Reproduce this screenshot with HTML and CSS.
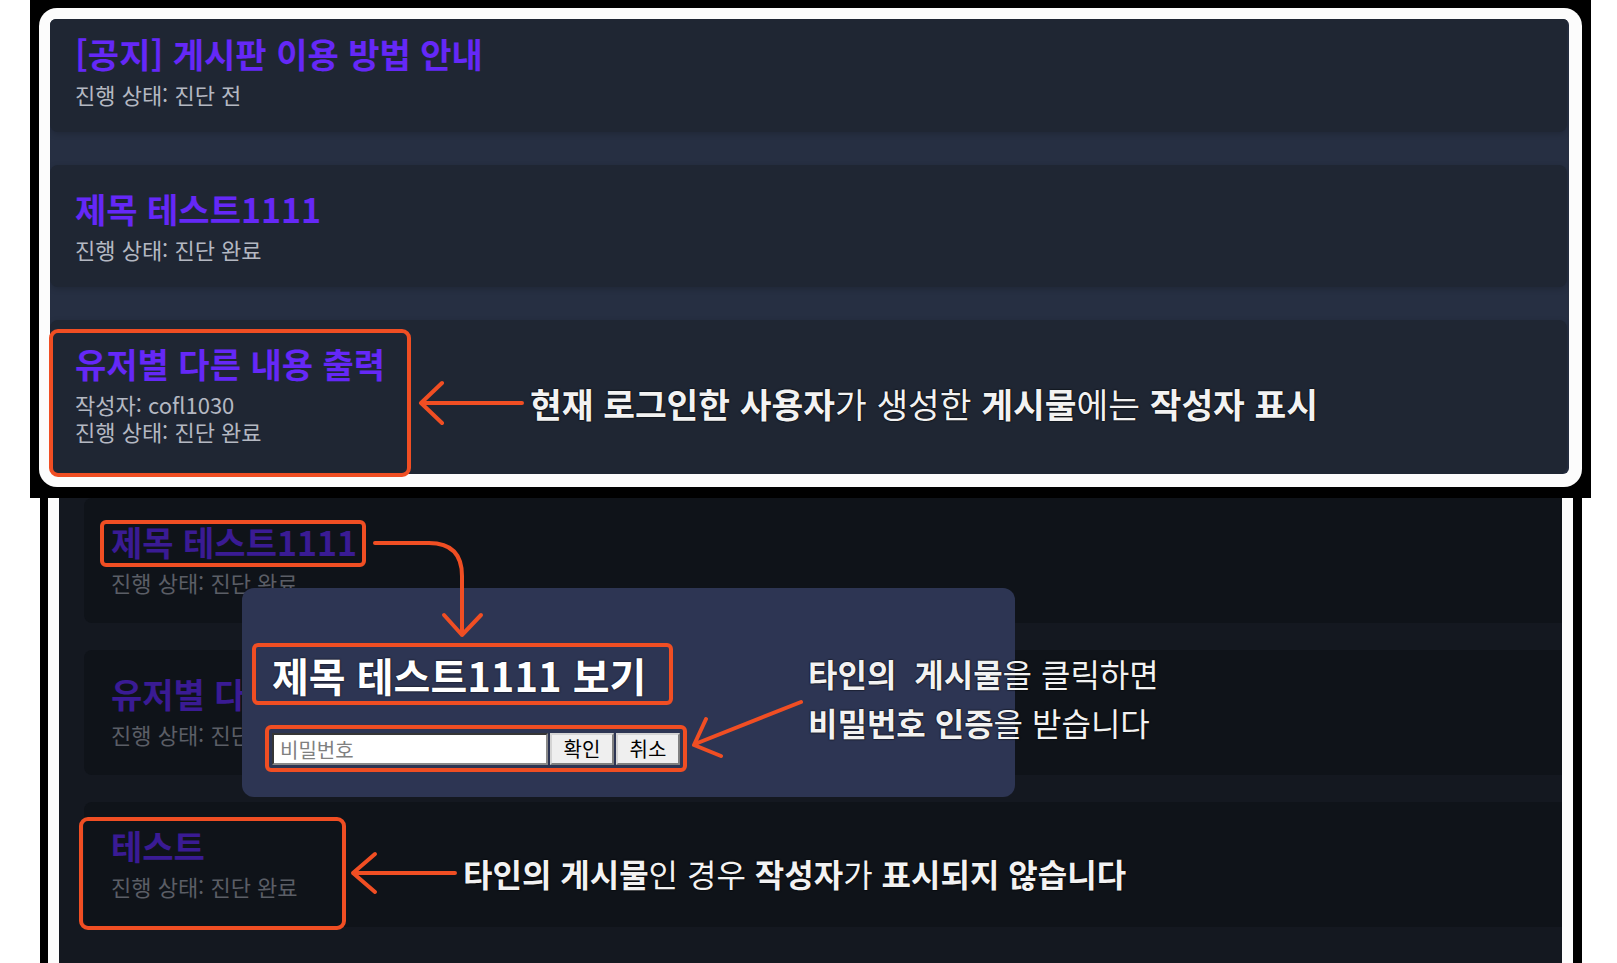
FILE: index.html
```html
<!DOCTYPE html>
<html lang="ko">
<head>
<meta charset="utf-8">
<title>게시판 안내</title>
<link rel="stylesheet" href="styles.css">
</head>
<body>
<section class="shot shot-top">
  <div class="frame frame-top">
    <div class="board">
      <article class="post post-cut">
        <h2 class="post-title">[공지] 게시판 이용 방법 안내</h2>
        <p class="post-meta">진행 상태: 진단 전</p>
      </article>
      <article class="post">
        <h2 class="post-title">제목 테스트1111</h2>
        <p class="post-meta">진행 상태: 진단 완료</p>
      </article>
      <article class="post post-last">
        <h2 class="post-title">유저별 다른 내용 출력</h2>
        <p class="post-meta">작성자: cofl1030</p>
        <p class="post-meta">진행 상태: 진단 완료</p>
      </article>
    </div>
  </div>
  <div class="mark mark-own"></div>
  <svg class="arrows" viewBox="0 0 1561 498" width="1561" height="498">
    <path d="M492 403 H391 M412 383 L391 403 L412 423"/>
  </svg>
  <p class="note note-own"><b>현재 로그인한 사용자</b>가 생성한 <b>게시물</b>에는 <b>작성자 표시</b></p>
</section>

<section class="shot shot-bottom">
  <div class="frame frame-bottom">
    <div class="board board-dim">
      <article class="post post-dim">
        <h2 class="post-title">제목 테스트1111</h2>
        <p class="post-meta">진행 상태: 진단 완료</p>
      </article>
      <article class="post post-dim">
        <h2 class="post-title">유저별 다른 내용 출력</h2>
        <p class="post-meta">진행 상태: 진단 완료</p>
      </article>
      <article class="post post-dim">
        <h2 class="post-title">테스트</h2>
        <p class="post-meta">진행 상태: 진단 완료</p>
      </article>
    </div>
  </div>
  <div class="modal">
    <h3 class="modal-title">제목 테스트1111 보기</h3>
    <form class="pw-row">
      <input class="pw-input" type="password" placeholder="비밀번호">
      <button type="button" class="pw-btn">확인</button>
      <button type="button" class="pw-btn">취소</button>
    </form>
  </div>
  <div class="mark mark-title"></div>
  <div class="mark mark-modal-title"></div>
  <div class="mark mark-input"></div>
  <div class="mark mark-other"></div>
  <svg class="arrows" viewBox="0 0 1542 465" width="1542" height="465">
    <path d="M335 45 H389 Q422 45 422 78 V137 M404 117 L422 137 L441 117"/>
    <path d="M761 204 L655 246 M666 221 L654 247 L681 258"/>
    <path d="M415 375 H313 M335 356 L313 375 L335 394"/>
  </svg>
  <p class="note note-modal"><b>타인의</b>&nbsp; <b>게시물</b>을 클릭하면<br><b>비밀번호 인증</b>을 받습니다</p>
  <p class="note note-other"><b>타인의 게시물</b>인 경우 <b>작성자</b>가 <b>표시되지 않습니다</b></p>
</section>
</body>
</html>
```

FILE: styles.css
```css
* {
  box-sizing: border-box;
  margin: 0;
  padding: 0;
}

html,
body {
  width: 1617px;
  height: 963px;
  overflow: hidden;
  background: #ffffff;
}

body {
  font-family: "Noto Sans CJK KR", "Noto Sans", sans-serif;
  display: flex;
  flex-direction: column;
}

/* screenshot panels */
.shot {
  position: relative;
  background: #000;
  flex: none;
}

.shot-top {
  margin-left: 30px;
  width: 1561px;
  height: 498px;
  padding: 8px 9px 11px;
}

.frame {
  height: 100%;
  background: #fcfcfc;
}

.frame-top {
  border-radius: 18px;
  padding: 11px 13px 13px 11px;
}

.board {
  height: 100%;
  background: #262f42;
  border-radius: 6px;
  overflow: hidden;
  display: flex;
  flex-direction: column;
  gap: 33px;
}

.post {
  background: #1f2633;
  border-radius: 8px;
  padding: 24px 24px 24px 25px;
  margin-right: 2px;
  box-shadow: 0 2px 6px rgba(0, 0, 0, 0.18);
  flex: none;
}

.post-cut {
  margin-top: -9px;
}

.post-last {
  flex: 1;
}

.post-title {
  font-size: 34px;
  line-height: 40px;
  font-weight: 700;
  color: #6528f7;
  margin-bottom: 7px;
  white-space: nowrap;
}

.post-meta {
  font-size: 22px;
  line-height: 27px;
  color: #b4b8c2;
  white-space: nowrap;
}

/* bottom screenshot */
.shot-bottom {
  margin-left: 40px;
  width: 1542px;
  height: 465px;
  padding: 0 9px 0 8px;
}

.frame-bottom {
  padding: 0 11px;
}

.board-dim {
  background: #141820;
  border-radius: 0;
  padding: 0 0 0 25px;
  gap: 27px;
}

.post-dim {
  background: #0f1319;
  padding: 24px 24px 27px 27px;
  margin-right: 0;
  border-radius: 8px 0 0 8px;
  box-shadow: none;
}

.post-dim .post-title {
  color: #3a1b94;
}

.post-dim .post-meta {
  color: #5b5e66;
}

/* modal */
.modal {
  position: absolute;
  left: 202px;
  top: 90px;
  width: 773px;
  height: 209px;
  background: #2d3553;
  border-radius: 12px;
  padding: 65px 30px 0;
}

.modal-title {
  font-size: 40px;
  line-height: 44px;
  font-weight: 700;
  color: #ffffff;
  margin-bottom: 36px;
  white-space: nowrap;
  text-shadow: 0 0 2px #000;
}

.pw-row {
  display: flex;
  gap: 2px;
}

.pw-input {
  width: 276px;
  height: 32px;
  border: 2px inset #8a8a8a;
  background: #fff;
  font-family: "Noto Sans CJK KR", sans-serif;
  font-size: 20px;
  padding: 0 6px;
  color: #000;
}

.pw-input::placeholder {
  color: #808080;
}

.pw-btn {
  width: 64px;
  height: 32px;
  font-family: "Noto Sans CJK KR", sans-serif;
  font-size: 20px;
  line-height: 26px;
  color: #000;
  background: #efefef;
  border: 2px outset #d4d4d4;
}

/* annotations */
.mark {
  position: absolute;
  border: 4px solid #f04e23;
  border-radius: 9px;
}

.mark-own {
  left: 19px;
  top: 329px;
  width: 362px;
  height: 148px;
}

.mark-title {
  left: 60px;
  top: 22px;
  width: 266px;
  height: 47px;
  border-radius: 6px;
}

.mark-modal-title {
  left: 212px;
  top: 145px;
  width: 421px;
  height: 62px;
  border-radius: 6px;
}

.mark-input {
  left: 225px;
  top: 227px;
  width: 422px;
  height: 47px;
  border-radius: 6px;
}

.mark-other {
  left: 39px;
  top: 319px;
  width: 267px;
  height: 113px;
}

.arrows {
  position: absolute;
  left: 0;
  top: 0;
  fill: none;
  stroke: #f04e23;
  stroke-width: 4;
  stroke-linecap: round;
  stroke-linejoin: round;
}

.note {
  position: absolute;
  color: #f2f2f2;
  white-space: nowrap;
  font-weight: 400;
  text-shadow: 0 0 2px #000, 0 0 1px #000;
}

.note b {
  font-weight: 700;
}

.note-own {
  left: 500px;
  top: 383px;
  font-size: 34.5px;
  line-height: 40px;
}

.note-modal {
  left: 768px;
  top: 151px;
  font-size: 32px;
  line-height: 49px;
}

.note-other {
  left: 423px;
  top: 355px;
  font-size: 32px;
  line-height: 40px;
}
```
